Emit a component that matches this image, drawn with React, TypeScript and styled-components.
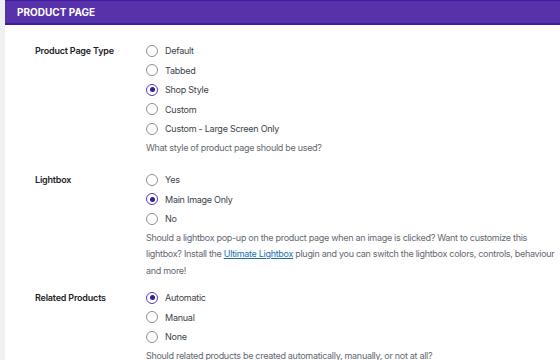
import { styled, createGlobalStyle } from "styled-components";

const GlobalStyle = createGlobalStyle`
  html, body {
    margin: 0;
    padding: 0;
    background: #f0f0f1;
  }
  body {
    font-family: Inter, "Noto Sans", "Liberation Sans", sans-serif;
    -webkit-font-smoothing: antialiased;
  }
`;

interface IOption {
  label: string;
  checked?: boolean;
}

interface ISection {
  title: string;
  options: IOption[];
  description: React.ReactNode;
  bottom: number;
}

const sections: ISection[] = [
  {
    title: "Product Page Type",
    options: [
      { label: "Default" },
      { label: "Tabbed" },
      { label: "Shop Style", checked: true },
      { label: "Custom" },
      { label: "Custom - Large Screen Only" },
    ],
    description: "What style of product page should be used?",
    bottom: 14,
  },
  {
    title: "Lightbox",
    options: [
      { label: "Yes" },
      { label: "Main Image Only", checked: true },
      { label: "No" },
    ],
    description: (
      <>
        Should a lightbox pop-up on the product page when an image is clicked? Want to customize this
        lightbox? Install the <a href="#">Ultimate Lightbox</a> plugin and you can switch the lightbox
        colors, controls, behaviour and more!
      </>
    ),
    bottom: 9,
  },
  {
    title: "Related Products",
    options: [
      { label: "Automatic", checked: true },
      { label: "Manual" },
      { label: "None" },
    ],
    description: "Should related products be created automatically, manually, or not at all?",
    bottom: 8,
  },
];

const App = () => {
  return (
    <>
      <GlobalStyle />
      <Card>
        <Header>Product Page</Header>
        <Body>
          {sections.map((section) => (
            <Row key={section.title} $bottom={section.bottom}>
              <Label>{section.title}</Label>
              <Field>
                {section.options.map((option) => (
                  <Option key={option.label}>
                    <Radio $checked={!!option.checked} />
                    <span>{option.label}</span>
                  </Option>
                ))}
                <Description>{section.description}</Description>
              </Field>
            </Row>
          ))}
        </Body>
      </Card>
    </>
  );
};

export default App;

const Card = styled.div`
  margin-left: 5px;
  height: 360px;
  background: #ffffff;
  overflow: hidden;
`;

const Header = styled.div`
  height: 22px;
  padding-left: 12px;
  display: flex;
  align-items: center;
  background: #5732a9;
  border-top: 1px solid #3d1ca3;
  border-bottom: 2px solid #3d1ca3;
  color: #ffffff;
  font-size: 10px;
  font-weight: 700;
  text-transform: uppercase;
`;

const Body = styled.div`
  padding: 16px 0 0 30px;
`;

const Row = styled.div<{ $bottom: number }>`
  display: grid;
  grid-template-columns: 111px 1fr;
  padding-bottom: ${(p) => p.$bottom}px;
`;

const Label = styled.div`
  height: 19.5px;
  display: flex;
  align-items: center;
  font-size: 9px;
  font-weight: 600;
  letter-spacing: -0.2px;
  color: #1d2327;
`;

const Field = styled.div`
  display: flex;
  flex-direction: column;
`;

const Option = styled.label`
  height: 19.5px;
  display: flex;
  align-items: center;
  column-gap: 7px;
  font-size: 9px;
  letter-spacing: -0.25px;
  color: #3c434a;
`;

const Radio = styled.span<{ $checked: boolean }>`
  width: 12px;
  height: 12px;
  box-sizing: border-box;
  border-radius: 50%;
  border: 1px solid ${(p) => (p.$checked ? "#5b34c4" : "#8c8f94")};
  display: flex;
  align-items: center;
  justify-content: center;
  flex-shrink: 0;

  &::after {
    content: "";
    display: ${(p) => (p.$checked ? "block" : "none")};
    width: 5px;
    height: 5px;
    border-radius: 50%;
    background: #3a1d8f;
  }
`;

const Description = styled.p`
  margin: 1px 0 0;
  font-size: 9px;
  letter-spacing: -0.3px;
  line-height: 16.5px;
  color: #646970;

  a {
    color: #2271b1;
    text-decoration: underline;
  }
`;
